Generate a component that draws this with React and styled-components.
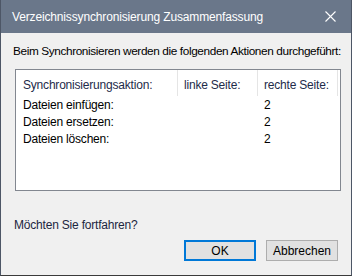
import styled, { createGlobalStyle } from "styled-components";

const GlobalStyle = createGlobalStyle`
  html, body {
    margin: 0;
    padding: 0;
    background: #ffffff;
  }
  body {
    font-family: "Liberation Sans", Arial, sans-serif;
    font-size: 12px;
    color: #000000;
  }
`;

const Window = styled.div`
  width: 352px;
  height: 276px;
  box-sizing: border-box;
  border: 1px solid #4d5666;
  border-top: none;
  border-bottom-color: #3a3a3a;
  background: #f0f0f0;
  display: flex;
  flex-direction: column;
`;

const TitleBar = styled.div`
  height: 33px;
  background: #6a778a;
  display: flex;
  align-items: center;
  justify-content: space-between;
  padding: 0 11px 0 11px;
  color: #ffffff;
  font-size: 12px;
`;

const Title = styled.span`
  letter-spacing: -0.15px;
`;

const CloseIcon = styled.svg`
  width: 11px;
  height: 11px;
  margin-right: 4px;
`;

const Body = styled.div`
  flex: 1;
  display: flex;
  flex-direction: column;
  padding: 0 8px 0 12px;
`;

const Message = styled.p`
  margin: 11px 0 0 0;
  line-height: 15px;
  white-space: nowrap;
  font-size: 11.8px;
  letter-spacing: -0.38px;
  color: #000000;
`;

const ListBox = styled.div`
  margin: 10px 0 0 2px;
  width: 326px;
  height: 122px;
  box-sizing: border-box;
  border: 1px solid #828790;
  background: #ffffff;
  display: flex;
  flex-direction: column;
`;

const Row = styled.div`
  display: grid;
  grid-template-columns: 162px 80px 80px;
  height: ${({ $header }) => ($header ? "26px" : "17px")};
  align-items: center;
`;

const Cell = styled.div`
  height: 100%;
  box-sizing: border-box;
  display: flex;
  align-items: center;
  padding-left: ${({ $first }) => ($first ? "7px" : "6px")};
  padding-top: ${({ $header }) => ($header ? "3px" : "0")};
  border-right: ${({ $header }) => ($header ? "1px solid #e5e5e5" : "none")};
  color: ${({ $header }) => ($header ? "#1e2b4a" : "#000000")};
  white-space: nowrap;
  letter-spacing: -0.2px;
`;

const Prompt = styled(Message)`
  margin-top: 27px;
  margin-left: 1px;
  font-size: 12px;
  letter-spacing: -0.2px;
  color: #1c2640;
`;

const ButtonRow = styled.div`
  display: flex;
  justify-content: flex-end;
  gap: 10px;
  margin-top: 7px;
  padding-right: 5px;
`;

const Button = styled.button`
  width: 72px;
  height: 21px;
  box-sizing: border-box;
  background: #e1e1e1;
  border: ${({ $primary }) =>
    $primary ? "2px solid #0078d7" : "1px solid #adadad"};
  font-family: "Liberation Sans", Arial, sans-serif;
  font-size: 12px;
  color: #000000;
  padding: 0;
`;

const rows = [
  { action: "Dateien einfügen:", left: "", right: "2" },
  { action: "Dateien ersetzen:", left: "", right: "2" },
  { action: "Dateien löschen:", left: "", right: "2" },
];

export default function App() {
  return (
    <>
      <GlobalStyle />
      <Window>
        <TitleBar>
          <Title>Verzeichnissynchronisierung Zusammenfassung</Title>
          <CloseIcon viewBox="0 0 11 11">
            <path d="M0.5 0.5 L10.5 10.5 M10.5 0.5 L0.5 10.5" stroke="#ffffff" strokeWidth="1.1" />
          </CloseIcon>
        </TitleBar>
        <Body>
          <Message>Beim Synchronisieren werden die folgenden Aktionen durchgeführt:</Message>
          <ListBox>
            <Row $header>
              <Cell $header $first>Synchronisierungsaktion:</Cell>
              <Cell $header>linke Seite:</Cell>
              <Cell $header>rechte Seite:</Cell>
            </Row>
            {rows.map((r) => (
              <Row key={r.action}>
                <Cell $first>{r.action}</Cell>
                <Cell>{r.left}</Cell>
                <Cell>{r.right}</Cell>
              </Row>
            ))}
          </ListBox>
          <Prompt>Möchten Sie fortfahren?</Prompt>
          <ButtonRow>
            <Button $primary>OK</Button>
            <Button>Abbrechen</Button>
          </ButtonRow>
        </Body>
      </Window>
    </>
  );
}
